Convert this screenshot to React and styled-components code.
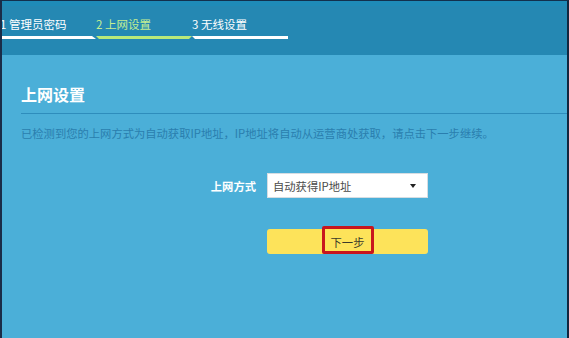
import React from "react";
import styled, { createGlobalStyle } from "styled-components";

const Global = createGlobalStyle`
  html, body { margin: 0; padding: 0; background: #4bafd8; }
  body { font-family: "Noto Sans CJK SC", "Noto Sans", sans-serif; }
  * { box-sizing: border-box; }
`;

const Frame = styled.div`
  width: 569px;
  height: 338px;
  display: flex;
  flex-direction: column;
  background: #4bafd8;
  border-top: 1px solid #13304d;
  border-left: 2px solid #1a2c48;
  border-right: 2px solid #12263f;
  overflow: hidden;
`;

const Header = styled.div`
  height: 54px;
  background: #2588b3;
  border-top: 5px solid #1f8bb8;
  display: flex;
  align-items: flex-start;
  overflow: hidden;
`;

const Tabs = styled.div`
  display: flex;
  margin-left: -2px;
  padding-top: 10px;
`;

const Tab = styled.div`
  width: 96px;
  display: flex;
  flex-direction: column;
  gap: 4px;
`;

const TabLabel = styled.span`
  font-size: 11.5px;
  line-height: 16px;
  color: ${(p) => (p.$active ? "#c4ef92" : "#ffffff")};
  white-space: nowrap;
`;

const clips = {
  first: "polygon(0 0, calc(100% - 4px) 0, 100% 100%, 0 100%)",
  active: "polygon(0 0, 100% 0, calc(100% - 3px) 100%, 3px 100%)",
  last: "polygon(0 0, 100% 0, 100% 100%, 3px 100%)",
};

const Bar = styled.div`
  height: 3px;
  background: ${(p) => (p.$active ? "#b9e97a" : "#ffffff")};
  clip-path: ${(p) => clips[p.$shape]};
`;

const Content = styled.div`
  flex: 1;
  padding: 29px 0 0 19px;
  display: flex;
  flex-direction: column;
`;

const Title = styled.h1`
  margin: 0;
  font-size: 16px;
  line-height: 20px;
  font-weight: 700;
  color: #ffffff;
`;

const Divider = styled.div`
  height: 1px;
  background: #2e8dbc;
  margin-top: 9px;
`;

const Desc = styled.p`
  margin: 11px 0 0;
  font-size: 11.3px;
  line-height: 16px;
  color: #2a7eae;
  white-space: nowrap;
`;

const FormRow = styled.div`
  display: grid;
  grid-template-columns: 235px 161px;
  column-gap: 11px;
  align-items: center;
  margin-top: ${(p) => p.$gap}px;
`;

const Label = styled.span`
  text-align: right;
  font-size: 11.3px;
  font-weight: 700;
  color: #ffffff;
`;

const Select = styled.div`
  height: 25px;
  background: #ffffff;
  border: 1px solid #d6dde2;
  display: flex;
  align-items: center;
  justify-content: space-between;
  padding: 0 11px 0 5px;
  font-size: 11.3px;
  color: #4a4a4a;
`;

const Button = styled.div`
  position: relative;
  height: 25px;
  background: #fde35a;
  border-radius: 3px;
  display: flex;
  align-items: center;
  justify-content: center;
  font-size: 11.3px;
  color: #3a3a2a;
`;

const Highlight = styled.span`
  position: absolute;
  left: 55px;
  top: -3px;
  width: 52px;
  height: 28px;
  border: 3px solid #c8161d;
  border-radius: 2px;
`;

export default function App() {
  return (
    <>
      <Global />
      <Frame>
        <Header>
          <Tabs>
            <Tab>
              <TabLabel>1 管理员密码</TabLabel>
              <Bar $shape="first" />
            </Tab>
            <Tab>
              <TabLabel $active>2 上网设置</TabLabel>
              <Bar $shape="active" $active />
            </Tab>
            <Tab>
              <TabLabel>3 无线设置</TabLabel>
              <Bar $shape="last" />
            </Tab>
          </Tabs>
        </Header>
        <Content>
          <Title>上网设置</Title>
          <Divider />
          <Desc>已检测到您的上网方式为自动获取IP地址，IP地址将自动从运营商处获取，请点击下一步继续。</Desc>
          <FormRow $gap={32}>
            <Label>上网方式</Label>
            <Select>
              <span>自动获得IP地址</span>
              <svg width="6" height="4" viewBox="0 0 6 4">
                <path d="M0 0 H6 L3 4 Z" fill="#222" />
              </svg>
            </Select>
          </FormRow>
          <FormRow $gap={31}>
            <span />
            <Button>
              下一步
              <Highlight />
            </Button>
          </FormRow>
        </Content>
      </Frame>
    </>
  );
}
